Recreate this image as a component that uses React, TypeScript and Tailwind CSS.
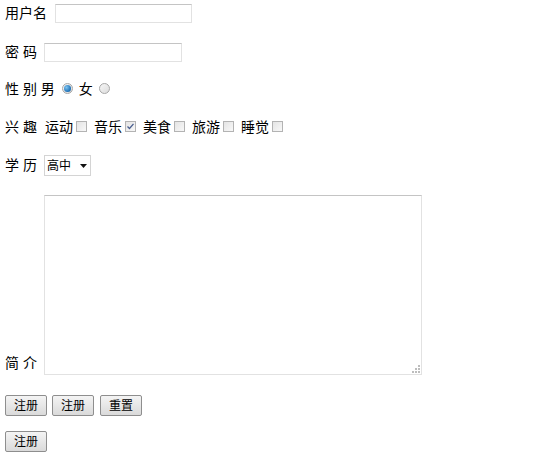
import React from "react";

const font = { fontFamily: '"Liberation Sans", "Noto Sans CJK SC", sans-serif' };

function Radio({ checked }: { checked?: boolean }) {
  return (
    <span className="inline-flex h-[11px] w-[11px] items-center justify-center rounded-full border border-[#a7a7a7] bg-gradient-to-br from-[#f6f6f6] to-[#dcdcdc]">
      {checked && (
        <span className="h-[7px] w-[7px] rounded-full bg-[radial-gradient(circle_at_35%_35%,#7fc4f0,#1b6fb5_70%,#0d4a85)]" />
      )}
    </span>
  );
}

function Check({ checked }: { checked?: boolean }) {
  return (
    <span className="inline-flex h-[11px] w-[11px] items-center justify-center border border-[#b3b3b3] bg-gradient-to-br from-[#e4e4e4] to-[#f8f8f8]">
      {checked && (
        <svg width="9" height="9" viewBox="0 0 9 9">
          <path d="M1.5 4.5 L3.5 6.5 L7.5 1.8" fill="none" stroke="#4a5f8f" strokeWidth="1.3" />
        </svg>
      )}
    </span>
  );
}

function Btn({ label }: { label: string }) {
  return (
    <button className="h-[21px] w-[42px] rounded-[2px] border border-[#8e8e8e] bg-gradient-to-b from-[#f4f4f4] to-[#dadada] text-[12px] leading-none text-black">
      {label}
    </button>
  );
}

const hobbies = [
  { name: "运动", on: false },
  { name: "音乐", on: true },
  { name: "美食", on: false },
  { name: "旅游", on: false },
  { name: "睡觉", on: false },
];

export default function App() {
  return (
    <div className="w-[550px] h-[471px] bg-white pl-[5px] text-[14px] text-black" style={font}>
      <div className="flex h-[27px] items-center">
        <span>用户名</span>
        <input className="ml-[8px] h-[19px] w-[137px] border border-[#e2e2e2] border-t-[#c4c4c4] outline-none" />
      </div>

      <div className="mt-[13px] flex h-[24px] items-center">
        <span>密 码</span>
        <input type="password" className="ml-[7px] h-[19px] w-[138px] border border-[#e2e2e2] border-t-[#c4c4c4] outline-none" />
      </div>

      <div className="mt-[13px] flex h-[24px] items-center">
        <span>性 别 男</span>
        <span className="ml-[7px] mb-[2px] flex"><Radio checked /></span>
        <span className="ml-[6px]">女</span>
        <span className="ml-[6px] mb-[2px] flex"><Radio /></span>
      </div>

      <div className="mt-[14px] flex h-[24px] items-center">
        <span>兴 趣</span>
        <div className="ml-[8px] flex items-center">
          {hobbies.map((h, i) => (
            <span key={i} className={`flex items-center ${i > 0 ? "ml-[7px]" : ""}`}>
              <span>{h.name}</span>
              <span className="ml-[3px] mb-[1px] flex"><Check checked={h.on} /></span>
            </span>
          ))}
        </div>
      </div>

      <div className="mt-[14px] flex h-[25px] items-center">
        <span>学 历</span>
        <div className="ml-[7px] flex h-[21px] w-[47px] items-center justify-between border border-[#d4d4d4] pl-[2px] pr-[3px] text-[12px]">
          <span>高中</span>
          <svg width="7" height="4" viewBox="0 0 7 4">
            <path d="M0 0 H7 L3.5 4 Z" fill="#111" />
          </svg>
        </div>
      </div>

      <div className="mt-[17px] flex items-end">
        <span className="mb-[1px]">简 介</span>
        <div className="relative ml-[7px] h-[180px] w-[378px] border border-[#e2e2e2] border-t-[#c4c4c4]">
          <textarea className="h-full w-full resize-none outline-none" />
          <svg className="absolute bottom-[1px] right-[1px]" width="8" height="8" viewBox="0 0 8 8">
            <rect x="6" y="0" width="2" height="2" fill="#bdbdbd" />
            <rect x="3" y="3" width="2" height="2" fill="#bdbdbd" />
            <rect x="6" y="3" width="2" height="2" fill="#bdbdbd" />
            <rect x="0" y="6" width="2" height="2" fill="#bdbdbd" />
            <rect x="3" y="6" width="2" height="2" fill="#bdbdbd" />
            <rect x="6" y="6" width="2" height="2" fill="#bdbdbd" />
          </svg>
        </div>
      </div>

      <div className="mt-[20px] flex gap-[5px]">
        <Btn label="注册" />
        <Btn label="注册" />
        <span className="ml-[1px] flex"><Btn label="重置" /></span>
      </div>

      <div className="mt-[15px] flex">
        <Btn label="注册" />
      </div>
    </div>
  );
}
